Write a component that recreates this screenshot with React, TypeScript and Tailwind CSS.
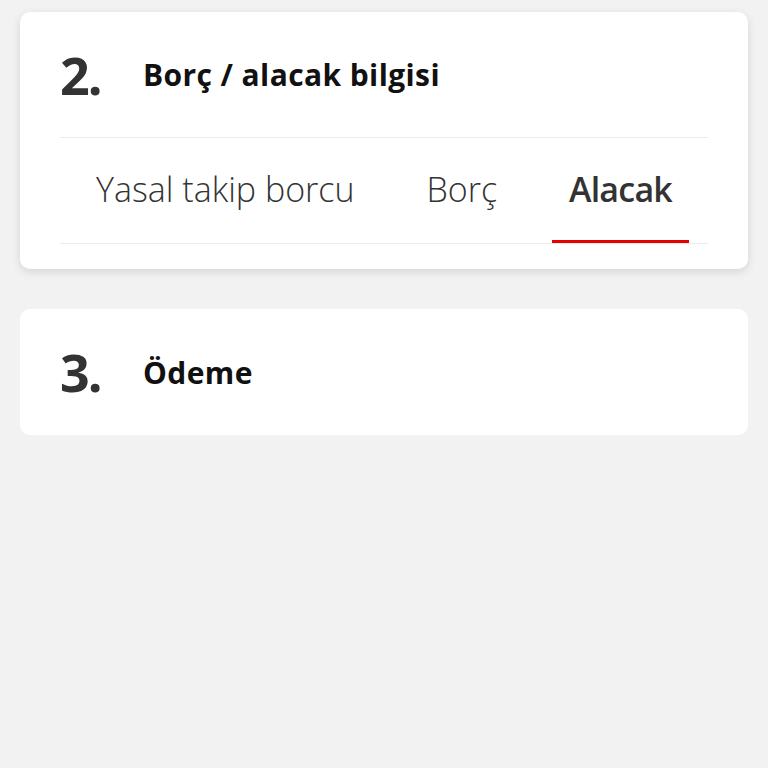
const font = { fontFamily: '"Open Sans", "Lato", sans-serif' };

function SectionHeader({ num, title }: { num: string; title: string }) {
  return (
    <div className="flex items-center h-[126px] px-[40px]">
      <span className="w-[83px] text-[52px] leading-none font-bold text-[#333333] tracking-[-2px]">{num}</span>
      <span className="text-[30px] font-bold text-[#111111] tracking-[0.4px]">{title}</span>
    </div>
  );
}

export default function App() {
  const tabs = ["Yasal takip borcu", "Borç", "Alacak"];
  const active = 2;
  return (
    <div className="min-h-[768px] w-[768px] bg-[#f2f2f2] px-[20px] pt-[12px]" style={font}>
      <div className="bg-white rounded-[10px] shadow-[0_3px_10px_rgba(0,0,0,0.12)]">
        <div className="flex items-center h-[125px] px-[40px]">
          <span className="w-[83px] text-[52px] leading-none font-bold text-[#333333] tracking-[-2px]">2.</span>
          <span className="text-[30px] font-bold text-[#111111] tracking-[0.4px]">Borç / alacak bilgisi</span>
        </div>
        <div className="mx-[40px] border-t border-b border-[#ebebeb]">
          <div className="flex justify-between px-[19px] h-[105px]">
            {tabs.map((t, i) => (
              <div
                key={t}
                className={`flex items-center px-[17px] border-b-[3px] text-[34px] text-[#333333] ${
                  i === active ? "border-[#e60000] font-semibold tracking-[-0.8px]" : "border-transparent font-light"
                }`}
              >
                {t}
              </div>
            ))}
          </div>
        </div>
        <div className="h-[25px]" />
      </div>
      <div className="mt-[40px] bg-white rounded-[10px]">
        <SectionHeader num="3." title="Ödeme" />
      </div>
    </div>
  );
}
